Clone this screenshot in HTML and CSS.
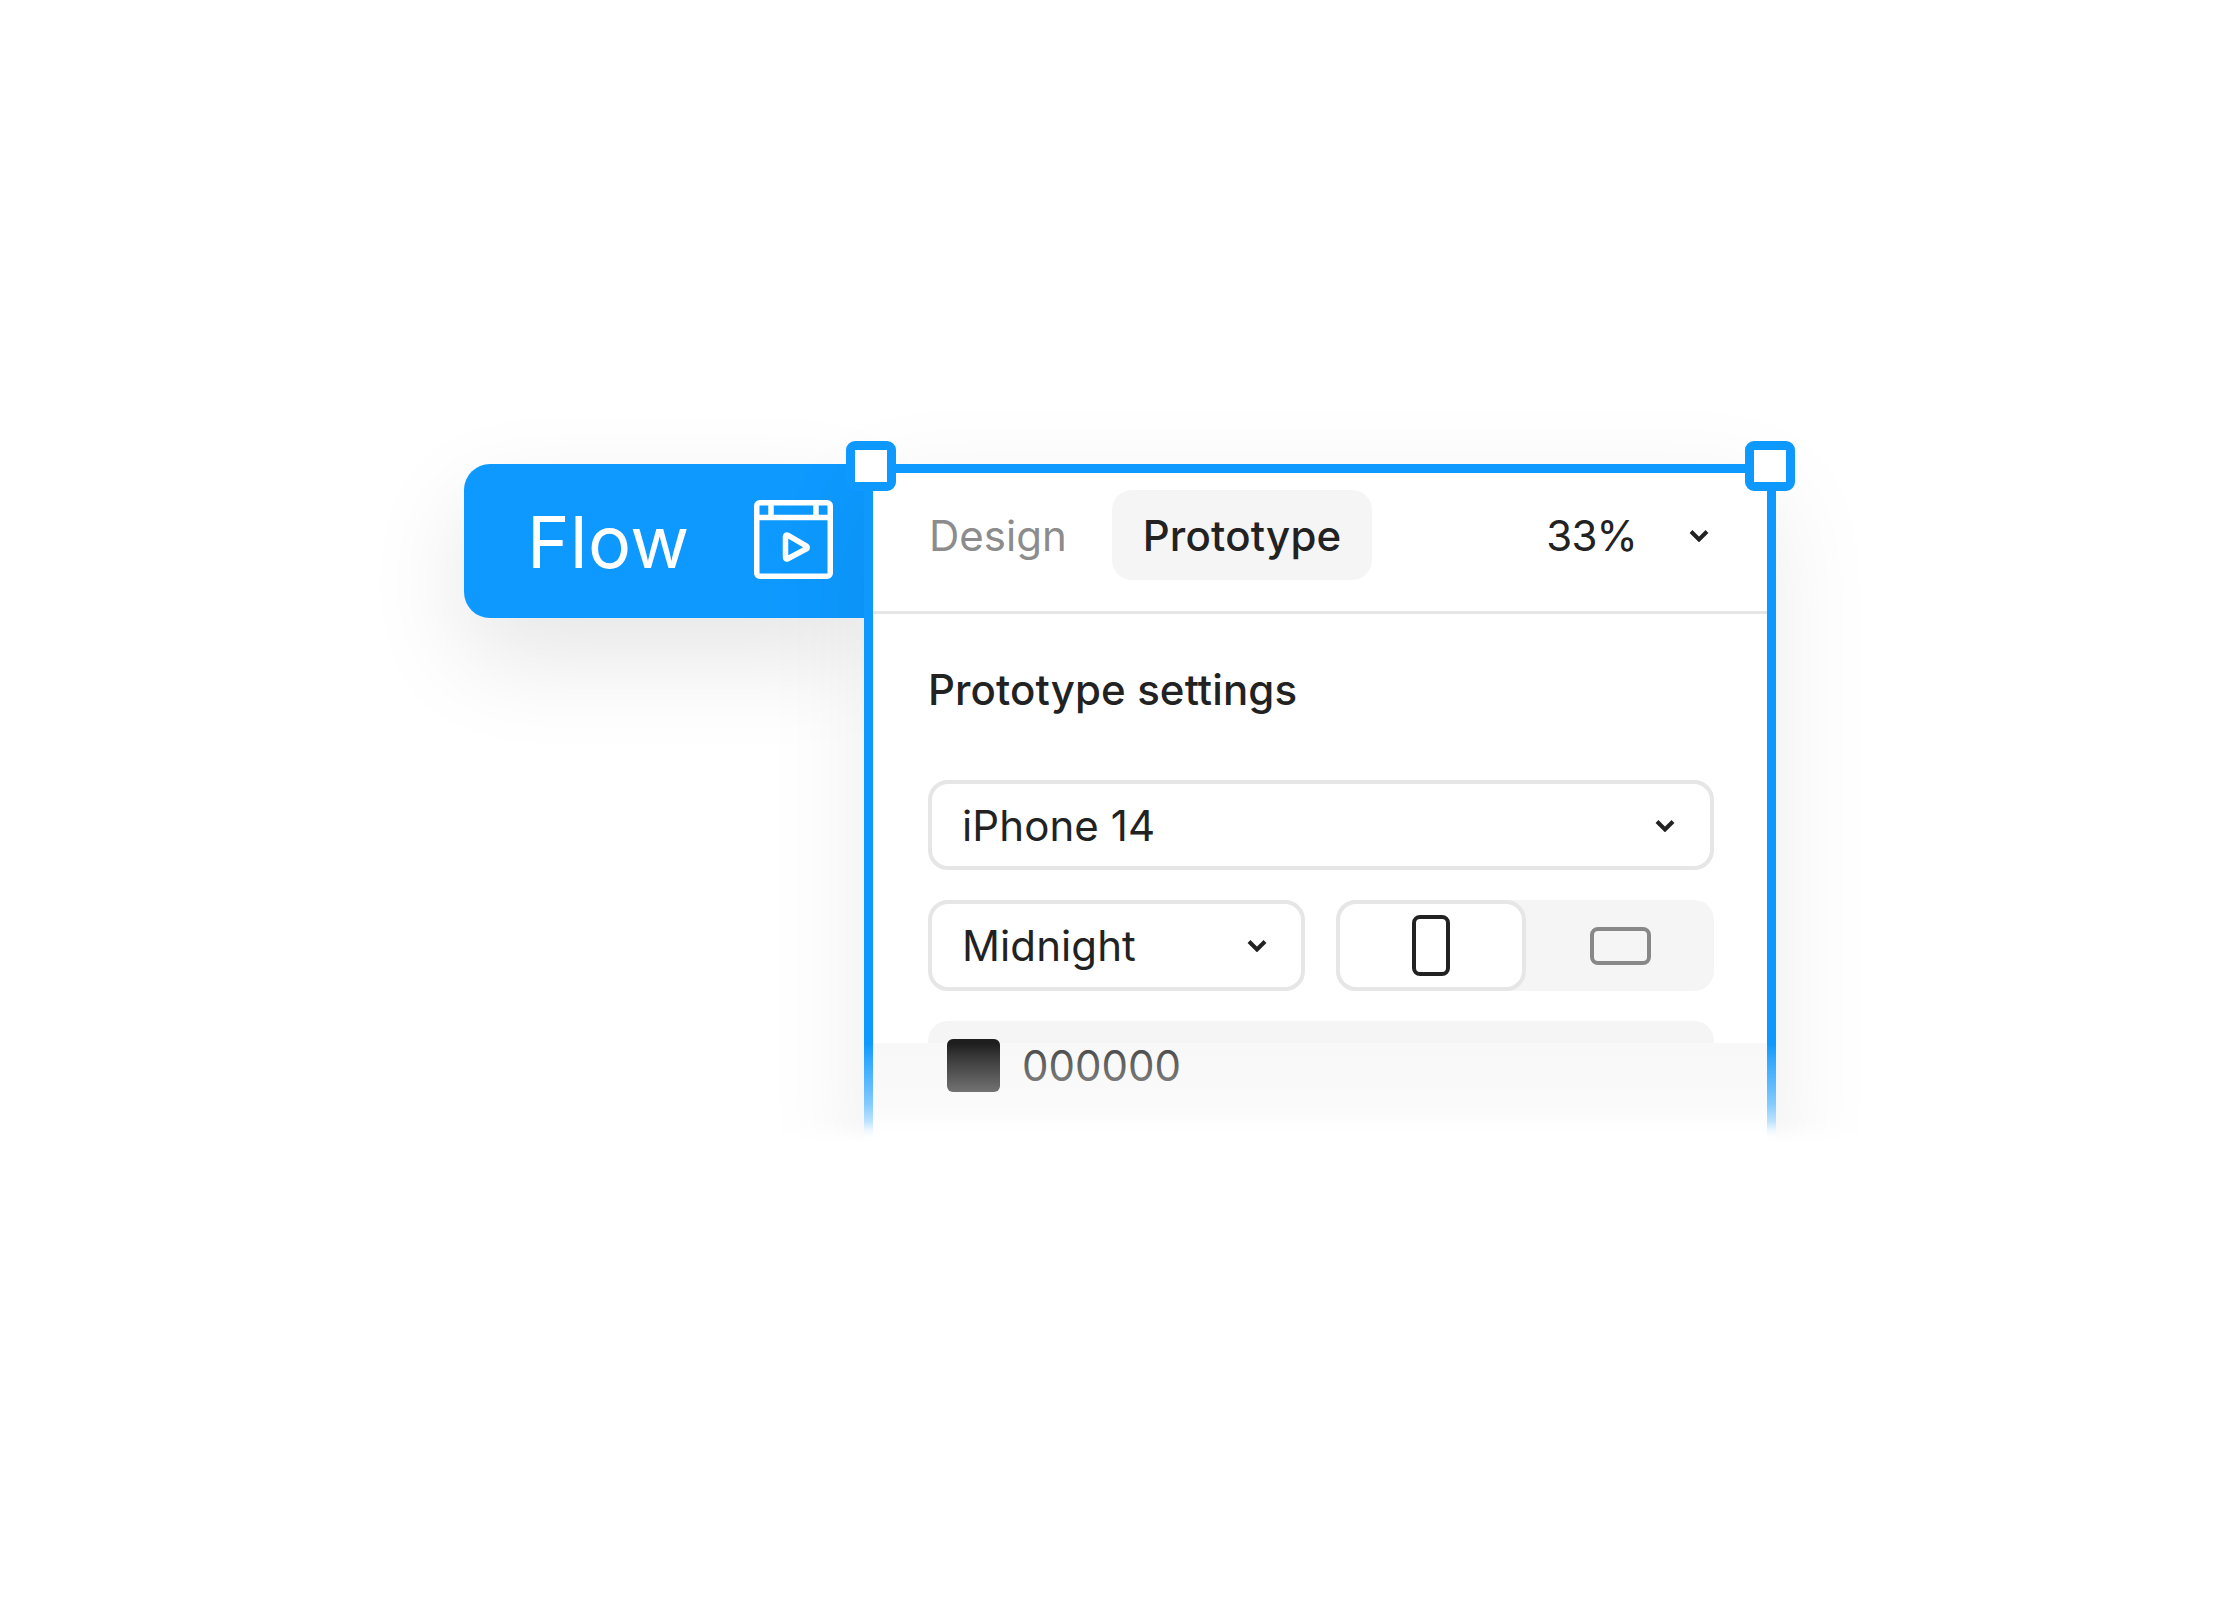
FILE: index.html
```html
<!DOCTYPE html>
<html>
<head>
  <title>Flow prototype settings</title>
  <link rel="stylesheet" href="styles.css">
</head>
<body>
  <div class="scene">
    <div class="flow-tag">
      <span class="flow-label">Flow</span>
      <svg class="flow-icon" width="79" height="79" viewBox="0 0 79 79" fill="none" stroke="#fff" stroke-width="5.5">
        <rect x="2.75" y="2.75" width="73.5" height="73.5" rx="3"/>
        <path d="M2.75 17.5H76.25"/>
        <path d="M17 3V17M62 3V17" stroke-width="5.5"/>
        <path d="M31.5 36.5V57.5a1.5 1.5 0 0 0 2.2 1.3L52.5 48.8a1.5 1.5 0 0 0 0-2.6L33.7 35.2a1.5 1.5 0 0 0-2.2 1.3Z" stroke-linejoin="round"/>
      </svg>
    </div>

    <div class="panel">
      <div class="tabs">
        <span class="tab">Design</span>
        <span class="tab tab-active">Prototype</span>
        <span class="zoom">33%</span>
        <svg class="chevron zoom-chevron" width="20" height="13" viewBox="0 0 20 13"><path d="M2 2.5L10 10.5L18 2.5"/></svg>
      </div>

      <div class="settings">
        <h2 class="settings-title">Prototype settings</h2>

        <div class="select">
          <span>iPhone 14</span>
          <svg class="chevron" width="20" height="13" viewBox="0 0 20 13"><path d="M2 2.5L10 10.5L18 2.5"/></svg>
        </div>

        <div class="row">
          <div class="select select-half">
            <span>Midnight</span>
            <svg class="chevron" width="20" height="13" viewBox="0 0 20 13"><path d="M2 2.5L10 10.5L18 2.5"/></svg>
          </div>
          <div class="toggle">
            <div class="toggle-item toggle-on">
              <svg width="38" height="61" viewBox="0 0 38 61" fill="none" stroke="#222" stroke-width="4"><rect x="2" y="2" width="34" height="57" rx="6"/></svg>
            </div>
            <div class="toggle-item">
              <svg width="61" height="38" viewBox="0 0 61 38" fill="none" stroke="#888" stroke-width="4"><rect x="2" y="2" width="57" height="34" rx="6"/></svg>
            </div>
          </div>
        </div>

        <div class="color">
          <span class="swatch"></span>
          <span class="color-value">000000</span>
        </div>
      </div>
    </div>

    <span class="handle handle-left"></span>
    <span class="handle handle-right"></span>
    <div class="fade"></div>
  </div>
</body>
</html>
```

FILE: styles.css
```css
* {
  box-sizing: border-box;
}
html, body {
  margin: 0;
  background: #fff;
}
body {
  font-family: Inter, "Noto Sans", sans-serif;
  color: #222;
}
.scene {
  position: relative;
  width: 2240px;
  height: 1600px;
  overflow: hidden;
  display: flex;
  justify-content: center;
  align-items: flex-start;
  padding-top: 464px;
}

/* blue tag on the left of the frame */
.flow-tag {
  width: 400px;
  height: 154px;
  display: flex;
  align-items: center;
  justify-content: space-between;
  padding: 0 31px 0 63px;
  background: #0d99ff;
  color: #fff;
  border-radius: 26px 0 0 26px;
  box-shadow: 0 40px 100px rgba(0, 0, 0, 0.1);
}
.flow-label {
  margin-top: 2px;
  font-size: 72px;
  line-height: 1;
  letter-spacing: 0.5px;
}
.flow-icon {
  margin-top: -3px;
}

/* selected frame */
.panel {
  width: 912px;
  height: 700px;
  background: #fff;
  border: 9px solid #0d99ff;
  border-bottom: 0;
  box-shadow: 0 30px 100px rgba(0, 0, 0, 0.075);
}
.tabs {
  height: 141px;
  display: flex;
  align-items: flex-start;
  padding: 17px 0 0 56px;
  border-bottom: 3px solid #e6e6e6;
  font-size: 42px;
}
.tab {
  height: 90px;
  line-height: 92px;
  color: #8c8c8c;
}
.tab:first-child {
  margin-right: 45px;
}
.tab-active {
  padding: 0 31px;
  background: #f5f5f5;
  border-radius: 20px;
  color: #222;
  font-weight: 500;
  letter-spacing: 0.2px;
}
.zoom {
  height: 90px;
  line-height: 92px;
  margin-left: auto;
  letter-spacing: -0.8px;
}
.chevron {
  flex: none;
  fill: none;
  stroke: #222;
  stroke-width: 4;
}
.zoom-chevron {
  margin: 39px 58px 0 52px;
}

.settings {
  display: flex;
  flex-direction: column;
  gap: 30px;
  padding: 0 53px 0 55px;
  font-size: 42px;
}
.settings-title {
  margin: 0;
  height: 136px;
  padding-top: 51px;
  font-size: 42px;
  line-height: 50px;
  font-weight: 500;
  letter-spacing: 0.1px;
}
.select {
  height: 90px;
  display: flex;
  align-items: center;
  justify-content: space-between;
  padding: 0 35px 0 30px;
  background: #fff;
  border: 4px solid #e6e6e6;
  border-radius: 20px;
  letter-spacing: 0.1px;
}
.row {
  display: flex;
  gap: 31px;
}
.select-half {
  width: 377px;
  height: 91px;
  padding-right: 34px;
}
.toggle {
  flex: 1;
  display: flex;
  height: 91px;
  background: #f5f5f5;
  border-radius: 20px;
}
.toggle-item {
  flex: 1;
  display: flex;
  align-items: center;
  justify-content: center;
}
.toggle-on {
  flex: none;
  width: 190px;
  background: #fff;
  border: 4px solid #e6e6e6;
  border-radius: 20px;
}
/* row colour stops where the fade starts, below that it blends with the panel */
.color {
  height: 100px;
  display: flex;
  align-items: flex-start;
  padding: 18px 0 0 19px;
  background: linear-gradient(#f5f5f5 22px, transparent 22px);
  border-radius: 20px 20px 0 0;
}
.swatch {
  width: 53px;
  height: 53px;
  background: #1e1e1e;
  border-radius: 6px;
}
.color-value {
  margin-left: 22px;
  line-height: 53px;
  color: #444;
}

/* square corner handles sit over the frame border */
.handle {
  position: absolute;
  top: 441px;
  width: 50px;
  height: 50px;
  background: #fff;
  border: 9px solid #0d99ff;
  border-radius: 9px;
}
.handle-left {
  left: 846px;
}
.handle-right {
  left: 1745px;
}

/* the bottom of the frame melts into the page */
.fade {
  position: absolute;
  left: 0;
  right: 0;
  top: 1043px;
  bottom: 0;
  background:
    linear-gradient(rgba(0, 0, 0, 0.028), rgba(0, 0, 0, 0.018) 62px, rgba(0, 0, 0, 0) 92px) 873px 0 / 894px 100% no-repeat,
    linear-gradient(rgba(255, 255, 255, 0), rgba(255, 255, 255, 0.15) 17px, rgba(255, 255, 255, 0.37) 47px, rgba(255, 255, 255, 0.5) 62px, rgba(255, 255, 255, 0.7) 77px, rgba(255, 255, 255, 0.92) 90px, #fff 100px) 864px 0 / 912px 100% no-repeat,
    linear-gradient(rgba(255, 255, 255, 0) 80px, #fff 100px);
}
```
